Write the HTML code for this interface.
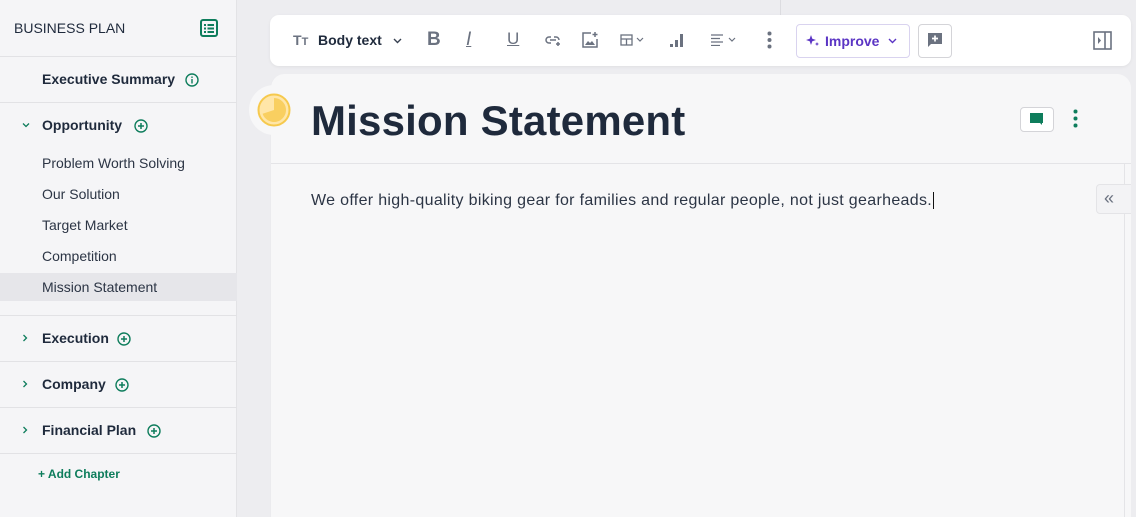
<!DOCTYPE html>
<html><head><style>
*{margin:0;padding:0;box-sizing:border-box}
html,body{width:1136px;height:517px;overflow:hidden}
body{background:#ededf0;font-family:"Liberation Sans",sans-serif;color:#1f2a3c;position:relative}
.a{position:absolute}
#side{left:0;top:0;width:237px;height:517px;background:#f5f5f7;border-right:1px solid #e3e3e6}
.hr{position:absolute;left:0;width:237px;height:1px;background:#e2e2e5}
.t{position:absolute;font-size:14px;white-space:nowrap}
.b{font-weight:bold;font-size:14px}
.sub{font-size:14px;color:#2c3545}
#tb{left:270px;top:15px;width:861px;height:51px;background:#fff;border-radius:9px;box-shadow:0 1px 3px rgba(0,0,0,.06)}
#card{left:270px;top:74px;width:861px;height:443px;background:#f7f7f8;border-radius:14px 14px 0 0;border-left:1px solid #ebebee;overflow:hidden}
</style></head><body>
<div id="side" class="a">
 <div class="t" style="left:14px;top:20px;font-size:14px;color:#1f2a3c">BUSINESS PLAN</div>
 <svg class="a" style="left:200px;top:19px" width="18" height="18" viewBox="0 0 18 18"><rect x="1" y="1" width="16" height="16" rx="2" fill="none" stroke="#0e7d5c" stroke-width="2"/><rect x="4" y="5" width="2" height="2" fill="#0e7d5c"/><rect x="7.5" y="5" width="6.5" height="2" fill="#0e7d5c"/><rect x="4" y="8.5" width="2" height="2" fill="#0e7d5c"/><rect x="7.5" y="8.5" width="6.5" height="2" fill="#0e7d5c"/><rect x="4" y="12" width="2" height="2" fill="#0e7d5c"/><rect x="7.5" y="12" width="6.5" height="2" fill="#0e7d5c"/></svg>
 <div class="hr" style="top:56px"></div>
 <div class="t b" style="left:42px;top:71px">Executive Summary</div>
 <svg class="a" style="left:185px;top:73px" width="14" height="14" viewBox="0 0 14 14"><circle cx="7" cy="7" r="6" fill="none" stroke="#0e7d5c" stroke-width="1.4"/><rect x="6.3" y="6" width="1.4" height="4.5" fill="#0e7d5c"/><rect x="6.3" y="3.5" width="1.4" height="1.4" fill="#0e7d5c"/></svg>
 <div class="hr" style="top:102px"></div>
 <svg class="a" style="left:22px;top:122px" width="8" height="6" viewBox="0 0 8 6"><path d="M1 1.5L4 4.5L7 1.5" fill="none" stroke="#0e7d5c" stroke-width="1.3"/></svg>
 <div class="t b" style="left:42px;top:117px">Opportunity</div>
 <svg class="a" style="left:134px;top:119px" width="14" height="14" viewBox="0 0 14 14"><circle cx="7" cy="7" r="6" fill="none" stroke="#0e7d5c" stroke-width="1.4"/><path d="M7 4v6M4 7h6" stroke="#0e7d5c" stroke-width="1.5"/></svg>
 <div class="t sub" style="left:42px;top:155px">Problem Worth Solving</div>
 <div class="t sub" style="left:42px;top:186px">Our Solution</div>
 <div class="t sub" style="left:42px;top:217px">Target Market</div>
 <div class="t sub" style="left:42px;top:248px">Competition</div>
 <div class="a" style="left:0;top:273px;width:237px;height:28px;background:#e6e6ea"></div>
 <div class="t sub" style="left:42px;top:279px">Mission Statement</div>
 <div class="hr" style="top:315px"></div>
 <div class="t b" style="left:42px;top:330px">Execution</div>
 <div class="hr" style="top:361px"></div>
 <div class="t b" style="left:42px;top:376px">Company</div>
 <div class="hr" style="top:407px"></div>
 <div class="t b" style="left:42px;top:422px">Financial Plan</div>
 <div class="hr" style="top:453px"></div>
 <svg class="a" style="left:22px;top:334px" width="6" height="8" viewBox="0 0 6 8"><path d="M1.5 1L4.5 4L1.5 7" fill="none" stroke="#0e7d5c" stroke-width="1.3"/></svg>
 <svg class="a" style="left:22px;top:380px" width="6" height="8" viewBox="0 0 6 8"><path d="M1.5 1L4.5 4L1.5 7" fill="none" stroke="#0e7d5c" stroke-width="1.3"/></svg>
 <svg class="a" style="left:22px;top:426px" width="6" height="8" viewBox="0 0 6 8"><path d="M1.5 1L4.5 4L1.5 7" fill="none" stroke="#0e7d5c" stroke-width="1.3"/></svg>
 <svg class="a" style="left:117px;top:332px" width="14" height="14" viewBox="0 0 14 14"><circle cx="7" cy="7" r="6" fill="none" stroke="#0e7d5c" stroke-width="1.4"/><path d="M7 4v6M4 7h6" stroke="#0e7d5c" stroke-width="1.5"/></svg>
 <svg class="a" style="left:115px;top:378px" width="14" height="14" viewBox="0 0 14 14"><circle cx="7" cy="7" r="6" fill="none" stroke="#0e7d5c" stroke-width="1.4"/><path d="M7 4v6M4 7h6" stroke="#0e7d5c" stroke-width="1.5"/></svg>
 <svg class="a" style="left:147px;top:424px" width="14" height="14" viewBox="0 0 14 14"><circle cx="7" cy="7" r="6" fill="none" stroke="#0e7d5c" stroke-width="1.4"/><path d="M7 4v6M4 7h6" stroke="#0e7d5c" stroke-width="1.5"/></svg>
 <div class="t" style="left:38px;top:467px;font-size:12px;font-weight:bold;color:#0e7d5c">+ Add Chapter</div>
</div>
<div class="a" style="left:780px;top:0;width:1px;height:15px;background:#dcdce0"></div>
<div id="tb" class="a">
 <div class="t" style="left:23px;top:17px;font-size:14px;color:#6b7280;font-weight:bold">T<span style="font-size:11px">T</span></div>
 <div class="t b" style="left:48px;top:17px">Body text</div>
 <svg class="a" style="left:123px;top:23px" width="9" height="6" viewBox="0 0 9 6"><path d="M1 1l3.5 3.5L8 1" fill="none" stroke="#374151" stroke-width="1.4"/></svg>
 <div class="t" style="left:157px;top:14px;font-size:19px;font-weight:bold;color:#6b7280">B</div>
 <div class="t" style="left:196px;top:14px;font-size:19px;font-style:italic;color:#6b7280;text-decoration:underline">I</div>
 <div class="t" style="left:237px;top:14px;font-size:17px;color:#6b7280;text-decoration:underline">U</div>
 <svg class="a" style="left:275px;top:18px" width="17" height="14" viewBox="0 0 17 14"><path d="M6 4H4a3 3 0 000 6h2M9 4h2a3 3 0 013 3M5 7h6M13 9v4M11 11h4" fill="none" stroke="#6b7280" stroke-width="1.5"/></svg>
 <svg class="a" style="left:311px;top:16px" width="18" height="18" viewBox="0 0 18 18"><path d="M10 2H2v14h14V8" fill="none" stroke="#6b7280" stroke-width="1.5"/><path d="M4 14l3-4 2 2 2-2 3 4z" fill="#6b7280"/><path d="M14 1v5M11.5 3.5h5" stroke="#6b7280" stroke-width="1.5"/></svg>
 <svg class="a" style="left:350px;top:19px" width="26" height="12" viewBox="0 0 26 12"><rect x="1" y="1" width="11" height="10" fill="none" stroke="#6b7280" stroke-width="1.3"/><path d="M1 5h11M6.5 5v6" stroke="#6b7280" stroke-width="1.3"/><path d="M17 4l3 3 3-3" fill="none" stroke="#6b7280" stroke-width="1.2"/></svg>
 <svg class="a" style="left:399px;top:16px" width="16" height="18" viewBox="0 0 16 18"><rect x="1" y="13" width="3" height="3" fill="#6b7280"/><rect x="6" y="9" width="3" height="7" fill="#6b7280"/><rect x="11" y="3" width="3" height="13" fill="#6b7280"/></svg>
 <svg class="a" style="left:441px;top:19px" width="28" height="12" viewBox="0 0 28 12"><path d="M0 1h12M0 4.5h9M0 8h12M0 11.5h9" stroke="#6b7280" stroke-width="1.2"/><path d="M18 4l3 3 3-3" fill="none" stroke="#6b7280" stroke-width="1.2"/></svg>
 <svg class="a" style="left:497px;top:16px" width="5" height="18" viewBox="0 0 5 18"><circle cx="2.5" cy="2.5" r="2" fill="#6b7280"/><circle cx="2.5" cy="9" r="2" fill="#6b7280"/><circle cx="2.5" cy="15.5" r="2" fill="#6b7280"/></svg>
 <div class="a" style="left:526px;top:9px;width:114px;height:34px;border:1px solid #d9d3ef;border-radius:4px"></div>
 <svg class="a" style="left:536px;top:19px" width="14" height="14" viewBox="0 0 14 14"><path d="M5 1l1.3 3.7L10 6 6.3 7.3 5 11 3.7 7.3 0 6l3.7-1.3z" fill="#5b35c4"/><path d="M11 8l.6 1.4L13 10l-1.4.6L11 12l-.6-1.4L9 10l1.4-.6z" fill="#5b35c4"/></svg>
 <div class="t b" style="left:555px;top:18px;color:#5b35c4">Improve</div>
 <svg class="a" style="left:618px;top:23px" width="9" height="6" viewBox="0 0 9 6"><path d="M1 1l3.5 3.5L8 1" fill="none" stroke="#5b35c4" stroke-width="1.4"/></svg>
 <div class="a" style="left:648px;top:9px;width:34px;height:34px;border:1px solid #d4d4d8;border-radius:4px"></div>
 <svg class="a" style="left:657px;top:17px" width="16" height="16" viewBox="0 0 16 16"><path d="M1 1h14v11H4l-3 3z" fill="#6b7280"/><path d="M8 3.5v6M5 6.5h6" stroke="#fff" stroke-width="1.7"/></svg>
 <svg class="a" style="left:823px;top:16px" width="19" height="19" viewBox="0 0 19 19"><rect x="1" y="1" width="17" height="17" fill="none" stroke="#6b7280" stroke-width="1.6"/><path d="M12 1v17" stroke="#6b7280" stroke-width="1.6"/><path d="M5 6l3 3.5-3 3.5z" fill="#6b7280"/></svg>
</div>
<div id="card" class="a">
 <div class="a" style="left:0;top:89px;width:861px;height:1px;background:#e4e4e7"></div>
 <div class="a" style="left:853px;top:90px;width:1px;height:353px;background:#e4e4e7"></div>
 <div class="t" style="left:40px;top:23px;font-size:42px;font-weight:bold;color:#1f2a3c;letter-spacing:.2px">Mission Statement</div>
 <div class="a" style="left:749px;top:33px;width:34px;height:25px;border:1px solid #d4d4d8;border-radius:4px;background:#fff"></div>
 <svg class="a" style="left:759px;top:39px" width="14" height="13" viewBox="0 0 14 13"><path d="M0 0h13v10h-1v2l-2-2H0z" fill="#0e7d5c"/></svg>
 <svg class="a" style="left:802px;top:35px" width="5" height="19" viewBox="0 0 5 19"><circle cx="2.5" cy="2.5" r="2" fill="#0e7d5c"/><circle cx="2.5" cy="9.5" r="2" fill="#0e7d5c"/><circle cx="2.5" cy="16.5" r="2" fill="#0e7d5c"/></svg>
 <div class="t" style="left:40px;top:118px;font-size:16px;color:#2c3545;letter-spacing:.32px">We offer high-quality biking gear for families and regular people, not just gearheads.<span style="border-left:1px solid #111;margin-left:1px"></span></div>
 <div class="a" style="left:825px;top:110px;width:36px;height:30px;background:#f3f3f5;border:1px solid #e4e4e7;border-radius:4px 0 0 4px"></div>
 <div class="t" style="left:833px;top:114px;font-size:18px;color:#6b7280">&laquo;</div>
</div>
<div class="a" style="left:249px;top:85px;width:50px;height:50px;border-radius:50%;background:#f7f7f8"></div>
<svg class="a" style="left:257px;top:93px" width="34" height="34" viewBox="0 0 34 34"><circle cx="17" cy="17" r="15.5" fill="#ffe6a8" stroke="#f6c94d" stroke-width="2"/><path d="M17 5A12 12 0 1 1 5.6 20.7L17 17z" fill="#f9cf60"/></svg>
</body></html>
